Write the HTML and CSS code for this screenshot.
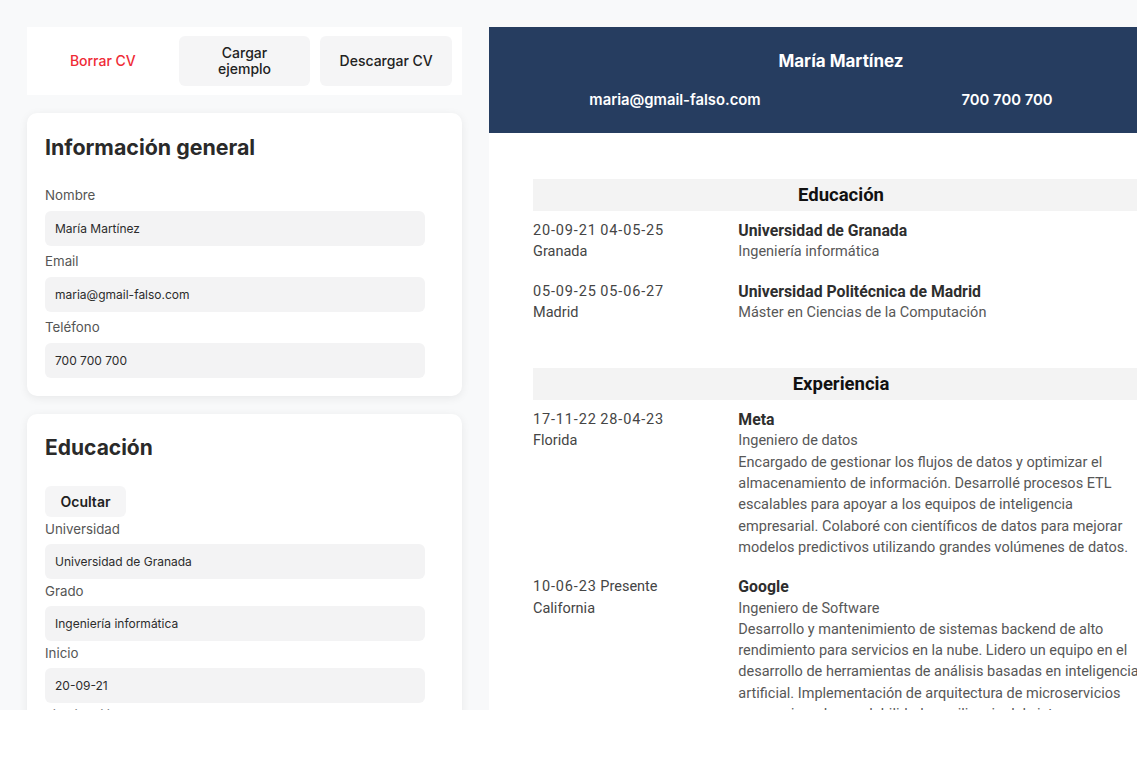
FILE: index.html
```html
<!DOCTYPE html>
<html lang="es">
<head>
<meta charset="utf-8">
<title>CV</title>
<link rel="stylesheet" href="styles.css">
</head>
<body>
<div class="app">
  <aside class="editor">
    <div class="toolbar">
      <button class="tbtn danger">Borrar CV</button>
      <button class="tbtn">Cargar<br>ejemplo</button>
      <button class="tbtn">Descargar CV</button>
    </div>

    <section class="card">
      <h2 class="card-title wide">Información general</h2>
      <div class="fields">
        <label class="label">Nombre</label>
        <div class="input">María Martínez</div>
        <label class="label">Email</label>
        <div class="input">maria@gmail-falso.com</div>
        <label class="label">Teléfono</label>
        <div class="input">700 700 700</div>
      </div>
    </section>

    <section class="card">
      <h2 class="card-title">Educación</h2>
      <button class="hide-btn">Ocultar</button>
      <div class="fields tight">
        <label class="label">Universidad</label>
        <div class="input">Universidad de Granada</div>
        <label class="label">Grado</label>
        <div class="input">Ingeniería informática</div>
        <label class="label">Inicio</label>
        <div class="input">20-09-21</div>
        <label class="label">Finalización</label>
        <div class="input">04-05-25</div>
      </div>
    </section>
  </aside>

  <main class="cv">
    <header class="cv-head">
      <div class="cv-name">María Martínez</div>
      <div class="cv-contact">
        <span>maria@gmail-falso.com</span>
        <span>700 700 700</span>
      </div>
    </header>

    <div class="cv-body">
      <section class="cv-section">
        <h3 class="cv-bar">Educación</h3>
        <div class="entry">
          <div class="meta"><span class="date">20-09-21</span> <span class="date">04-05-25</span><br>Granada</div>
          <div class="main"><strong>Universidad de Granada</strong>Ingeniería informática</div>
        </div>
        <div class="entry">
          <div class="meta"><span class="date">05-09-25</span> <span class="date">05-06-27</span><br>Madrid</div>
          <div class="main"><strong>Universidad Politécnica de Madrid</strong>Máster en Ciencias de la Computación</div>
        </div>
      </section>

      <section class="cv-section">
        <h3 class="cv-bar">Experiencia</h3>
        <div class="entry">
          <div class="meta"><span class="date">17-11-22</span> <span class="date">28-04-23</span><br>Florida</div>
          <div class="main"><strong>Meta</strong>Ingeniero de datos<br>Encargado de gestionar los flujos de datos y optimizar el almacenamiento de información. Desarrollé procesos ETL escalables para apoyar a los equipos de inteligencia empresarial. Colaboré con científicos de datos para mejorar modelos predictivos utilizando grandes volúmenes de datos.</div>
        </div>
        <div class="entry">
          <div class="meta"><span class="date">10-06-23</span> Presente<br>California</div>
          <div class="main"><strong>Google</strong>Ingeniero de Software<br>Desarrollo y mantenimiento de sistemas backend de alto rendimiento para servicios en la nube. Lidero un equipo en el desarrollo de herramientas de análisis basadas en inteligencia artificial. Implementación de arquitectura de microservicios para mejorar la escalabilidad y resiliencia del sistema.</div>
        </div>
      </section>
    </div>
  </main>
</div>
</body>
</html>
```

FILE: styles.css
```css
* { box-sizing: border-box; }

html, body {
  margin: 0;
  padding: 0;
  background: #ffffff;
}

body {
  font-family: Inter, "Noto Sans", sans-serif;
  color: #333;
  overflow: hidden;
}

.app {
  height: 710px;
  overflow: hidden;
  background: #f8f9fa;
  display: grid;
  grid-template-columns: 435px 704px;
  column-gap: 27px;
  padding: 27px 0 0 27px;
  align-items: start;
}

/* ---------- editor ---------- */
.editor {
  display: flex;
  flex-direction: column;
  gap: 18px;
}

.toolbar {
  background: #fff;
  padding: 9px 10px;
  display: grid;
  grid-template-columns: repeat(3, 1fr);
  gap: 10px;
}

.tbtn {
  height: 50px;
  border: none;
  border-radius: 6px;
  background: #f5f5f6;
  font-family: Inter, sans-serif;
  font-size: 14px;
  font-weight: 500;
  line-height: 16px;
  color: #222;
  padding: 0 6px;
}

.tbtn.danger {
  background: transparent;
  color: #ef2b36;
}

.card {
  background: #fff;
  border-radius: 10px;
  box-shadow: 0 2px 10px rgba(0, 0, 0, 0.07);
  padding: 21px 18px 18px;
}

.card-title {
  margin: 0;
  font-size: 21px;
  line-height: 26px;
  font-weight: 700;
  color: #2a2a2a;
}

.card-title.wide {
  font-size: 21.4px;
}

.fields {
  display: flex;
  flex-direction: column;
  margin-top: 20px;
}

.label {
  display: block;
  font-size: 13.3px;
  line-height: 20px;
  color: #555;
  margin: 5px 0 6px;
}

.input {
  width: 380px;
  height: 35px;
  border-radius: 6px;
  background: #f3f3f4;
  font-size: 12px;
  line-height: 35px;
  padding: 0 10px;
  color: #2c2c2c;
}

.hide-btn {
  margin-top: 25px;
  width: 81px;
  height: 31px;
  border: none;
  border-radius: 6px;
  background: #f5f5f6;
  font-family: Inter, sans-serif;
  font-size: 14px;
  font-weight: 600;
  color: #222;
  display: block;
}

.fields.tight {
  margin-top: 0;
}

.fields.tight .label {
  margin: 2px 0 5px;
}

/* ---------- CV ---------- */
.cv {
  background: #fff;
  height: 683px;
  font-family: Roboto, "Liberation Sans", sans-serif;
}

.cv-head {
  background: #263d60;
  color: #fff;
  padding: 22px 20px 23px;
  font-family: Inter, sans-serif;
}

.cv-name {
  text-align: center;
  font-size: 17px;
  line-height: 24px;
  font-weight: 700;
}

.cv-contact {
  margin-top: 17px;
  display: grid;
  grid-template-columns: 1fr 1fr;
  text-align: center;
  font-size: 14.8px;
  line-height: 20px;
  font-weight: 600;
}

.cv-body {
  padding: 0 44px;
}

.cv-section {
  margin-top: 46px;
}

.cv-section + .cv-section {
  margin-top: 45px;
}

.cv-bar {
  margin: 0 0 9px;
  height: 32px;
  line-height: 32px;
  background: #f3f3f3;
  text-align: center;
  font-size: 18.5px;
  font-weight: 700;
  color: #111;
}

.entry {
  display: grid;
  grid-template-columns: 1fr 2fr;
  font-size: 14.5px;
  line-height: 21.3px;
  color: #575757;
}

.entry + .entry {
  margin-top: 18px;
}

.meta {
  color: #454545;
}

.date {
  letter-spacing: 0.85px;
}

.main strong {
  display: block;
  color: #2e2e2e;
  font-weight: 700;
  font-size: 15.8px;
  line-height: 21.3px;
}
```
